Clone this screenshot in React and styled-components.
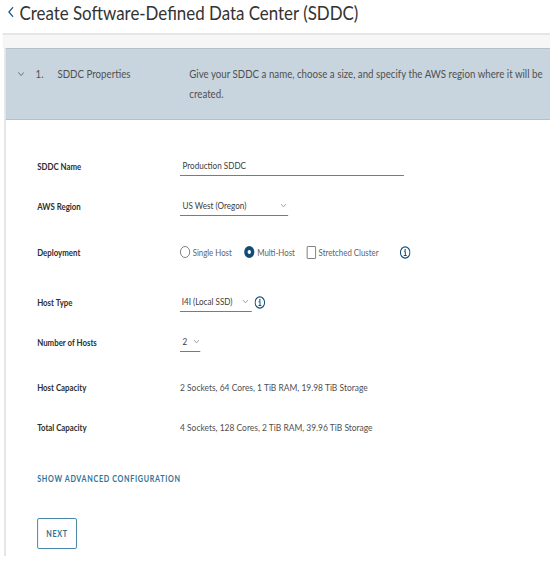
import React from 'react';
import styled, { createGlobalStyle } from 'styled-components';

// the reference is squeezed horizontally, so the page is laid out wider and scaled down
const SQUEEZE = 0.845;

const Global = createGlobalStyle`
  html, body { margin: 0; padding: 0; background: #fff; overflow: hidden; }
  body { font-family: Lato, "Liberation Sans", sans-serif; color: #4a4a4a; }
`;

const Page = styled.div`
  width: ${550 / SQUEEZE}px;
  height: 563px;
  overflow: hidden;
  transform: scaleX(${SQUEEZE});
  transform-origin: left top;
`;

const TitleBar = styled.div`
  display: flex;
  align-items: center;
  gap: 4px;
  height: 33px;
  padding: 0 0 10px 7px;
  box-sizing: border-box;
`;

const Title = styled.h1`
  margin: 0;
  font-size: 20px;
  font-weight: 400;
  color: #333;
  white-space: nowrap;
`;

const Card = styled.div`
  margin-left: 3px;
  height: 530px;
  border-top: 2px solid #e6e6e6;
  background: linear-gradient(#f6f6f6 13px, #fff 13px);
  box-sizing: border-box;
  padding-top: 13px;
`;

const Step = styled.div`
  margin-left: 2px;
  height: 508px;
  border-left: 2px solid #e2e2e2;
`;

const StepHeader = styled.div`
  display: grid;
  grid-template-columns: 21px 26px 156px 1fr;
  height: 72px;
  padding: 15px 0 0 14px;
  box-sizing: border-box;
  background: #c8d5df;
  border-top: 1px solid #b4bfc8;
  border-bottom: 1px solid #b4bfc8;
  font-size: 11.5px;
  line-height: 20px;
  color: #505050;
`;

const HeaderIcon = styled.span`
  display: flex;
  align-items: center;
  height: 20px;
`;

const Description = styled.div`
  white-space: nowrap;
`;

const Form = styled.div`
  padding: 26px 0 0 37px;
`;

const Row = styled.div`
  display: grid;
  grid-template-columns: 169px 1fr;
  align-items: center;
  height: ${(p) => p.$height}px;
`;

const Label = styled.div`
  font-size: 9.3px;
  font-weight: 700;
  color: #2e2e2e;
  white-space: nowrap;
`;

const Value = styled.div`
  font-size: 10px;
  color: #4f4f4f;
  white-space: nowrap;
`;

const Field = styled.div`
  display: inline-flex;
  align-items: center;
  justify-content: space-between;
  box-sizing: border-box;
  width: ${(p) => p.$width}px;
  height: 20px;
  padding: ${(p) => p.$padding || '0 2px 0 3px'};
  border-bottom: 1px solid #6f7f86;
  font-size: 9.6px;
  color: #3c3c3c;
  white-space: nowrap;
`;

const Inline = styled.div`
  display: flex;
  align-items: center;
  gap: ${(p) => p.$gap || 0}px;
`;

const Option = styled.div`
  display: flex;
  align-items: center;
  gap: 3px;
  margin-right: ${(p) => p.$gap}px;
  font-size: 9.3px;
  color: #5f5f5f;
  white-space: nowrap;
`;

const Radio = styled.span`
  box-sizing: border-box;
  width: 12px;
  height: 12px;
  border-radius: 50%;
  background: ${(p) => (p.$checked ? '#fff' : 'transparent')};
  border: ${(p) => (p.$checked ? '4px solid #0f4c7a' : '1px solid #777')};
`;

const Checkbox = styled.span`
  box-sizing: border-box;
  width: 11px;
  height: 13px;
  border: 1px solid #777;
  border-radius: 1px;
`;

const AdvancedLink = styled.div`
  margin-top: 2px;
  font-size: 8.5px;
  font-weight: 700;
  letter-spacing: 0.8px;
  color: #2f7397;
  white-space: nowrap;
`;

const NextButton = styled.button`
  display: block;
  width: 47px;
  height: 31px;
  padding: 0;
  background: #fff;
  border: 1px solid #3b7ea3;
  border-radius: 2px;
  font-family: inherit;
  font-size: 8.5px;
  font-weight: 700;
  letter-spacing: 0.8px;
  color: #2f6f90;
`;

const Chevron = ({ size = 7, color = '#7d8b93', dir = 'down' }) => (
  <svg width={size} height={size} viewBox="0 0 10 10" fill="none" stroke={color} strokeWidth="1.2">
    {dir === 'down' ? <path d="M1 3l4 4 4-4" /> : <path d="M7 1L3 5l4 4" />}
  </svg>
);

const Info = ({ color = '#0f4c7a' }) => (
  <svg width="13" height="13" viewBox="0 0 13 13" fill="none">
    <circle cx="6.5" cy="6.5" r="5.6" stroke={color} strokeWidth="1.2" />
    <circle cx="6.5" cy="3.9" r="0.9" fill={color} />
    <path d="M5 5.8h1.7v3.6M4.9 9.5h3.4" stroke={color} strokeWidth="1.1" />
  </svg>
);

export default function App() {
  return (
    <Page>
      <Global />
      <TitleBar>
        <Chevron size={12} color="#1d5a85" dir="left" />
        <Title>Create Software-Defined Data Center (SDDC)</Title>
      </TitleBar>
      <Card>
        <Step>
          <StepHeader>
            <HeaderIcon><Chevron size={8} color="#566" /></HeaderIcon>
            <span>1.</span>
            <span>SDDC Properties</span>
            <Description>
              Give your SDDC a name, choose a size, and specify the AWS region where it will be
              <br />
              created.
            </Description>
          </StepHeader>
          <Form>
            <Row $height={40}>
              <Label>SDDC Name</Label>
              <Field $width={265}>Production SDDC</Field>
            </Row>
            <Row $height={40}>
              <Label>AWS Region</Label>
              <Field $width={128}>
                US West (Oregon)
                <Chevron size={7} />
              </Field>
            </Row>
            <Row $height={52}>
              <Label>Deployment</Label>
              <Inline>
                <Option $gap={15}><Radio />Single Host</Option>
                <Option $gap={14}><Radio $checked />Multi-Host</Option>
                <Option $gap={25}><Checkbox />Stretched Cluster</Option>
                <Info />
              </Inline>
            </Row>
            <Row $height={48}>
              <Label>Host Type</Label>
              <Inline $gap={3}>
                <Field $width={85} $padding="0 4px 0 2px">
                  I4I (Local SSD)
                  <Chevron size={7} />
                </Field>
                <Info />
              </Inline>
            </Row>
            <Row $height={32}>
              <Label>Number of Hosts</Label>
              <Field $width={24} $padding="0 1px 0 3px">
                2
                <Chevron size={7} />
              </Field>
            </Row>
            <Row $height={58}>
              <Label>Host Capacity</Label>
              <Value>2 Sockets, 64 Cores, 1 TiB RAM, 19.98 TiB Storage</Value>
            </Row>
            <Row $height={22}>
              <Label>Total Capacity</Label>
              <Value>4 Sockets, 128 Cores, 2 TiB RAM, 39.96 TiB Storage</Value>
            </Row>
            <Row $height={80}>
              <AdvancedLink>SHOW ADVANCED CONFIGURATION</AdvancedLink>
            </Row>
            <NextButton>NEXT</NextButton>
          </Form>
        </Step>
      </Card>
    </Page>
  );
}
